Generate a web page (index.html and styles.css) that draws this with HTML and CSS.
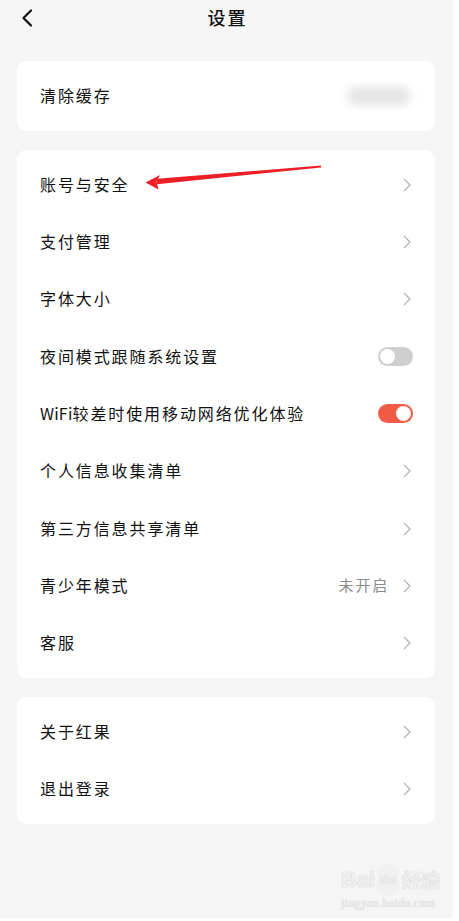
FILE: index.html
```html
<!DOCTYPE html>
<html lang="zh">
<head>
<meta charset="utf-8">
<title>设置</title>
<link rel="stylesheet" href="styles.css">
</head>
<body>
<div class="screen">
  <header class="topbar">
    <svg class="back" width="12" height="18" viewBox="0 0 12 18"><path d="M10 1.5 L2.5 9 L10 16.5" fill="none" stroke="#111" stroke-width="2.2" stroke-linecap="round" stroke-linejoin="round"/></svg>
    <h1 class="title">设置</h1>
  </header>

  <main class="cards">
    <section class="card">
      <div class="row row-cache">
        <span class="label">清除缓存</span>
        <span class="blurred"></span>
      </div>
    </section>

    <section class="card">
      <div class="row"><span class="label">账号与安全</span><svg class="chev" width="8" height="14" viewBox="0 0 8 14"><path d="M1 1 L7 7 L1 13" fill="none" stroke="#b4b4b4" stroke-width="1.3"/></svg></div>
      <div class="row"><span class="label">支付管理</span><svg class="chev" width="8" height="14" viewBox="0 0 8 14"><path d="M1 1 L7 7 L1 13" fill="none" stroke="#b4b4b4" stroke-width="1.3"/></svg></div>
      <div class="row"><span class="label">字体大小</span><svg class="chev" width="8" height="14" viewBox="0 0 8 14"><path d="M1 1 L7 7 L1 13" fill="none" stroke="#b4b4b4" stroke-width="1.3"/></svg></div>
      <div class="row"><span class="label">夜间模式跟随系统设置</span><span class="toggle"><span class="knob"></span></span></div>
      <div class="row"><span class="label"><span class="latin">WiFi</span>较差时使用移动网络优化体验</span><span class="toggle on"><span class="knob"></span></span></div>
      <div class="row"><span class="label">个人信息收集清单</span><svg class="chev" width="8" height="14" viewBox="0 0 8 14"><path d="M1 1 L7 7 L1 13" fill="none" stroke="#b4b4b4" stroke-width="1.3"/></svg></div>
      <div class="row"><span class="label">第三方信息共享清单</span><svg class="chev" width="8" height="14" viewBox="0 0 8 14"><path d="M1 1 L7 7 L1 13" fill="none" stroke="#b4b4b4" stroke-width="1.3"/></svg></div>
      <div class="row"><span class="label">青少年模式</span><span class="value">未开启</span><svg class="chev" width="8" height="14" viewBox="0 0 8 14"><path d="M1 1 L7 7 L1 13" fill="none" stroke="#b4b4b4" stroke-width="1.3"/></svg></div>
      <div class="row"><span class="label">客服</span><svg class="chev" width="8" height="14" viewBox="0 0 8 14"><path d="M1 1 L7 7 L1 13" fill="none" stroke="#b4b4b4" stroke-width="1.3"/></svg></div>
    </section>

    <section class="card">
      <div class="row"><span class="label">关于红果</span><svg class="chev" width="8" height="14" viewBox="0 0 8 14"><path d="M1 1 L7 7 L1 13" fill="none" stroke="#b4b4b4" stroke-width="1.3"/></svg></div>
      <div class="row"><span class="label">退出登录</span><svg class="chev" width="8" height="14" viewBox="0 0 8 14"><path d="M1 1 L7 7 L1 13" fill="none" stroke="#b4b4b4" stroke-width="1.3"/></svg></div>
    </section>
  </main>

  <svg class="arrow" width="190" height="30" viewBox="140 162 190 30">
    <polygon points="321,165.6 321,167.4 157,184.2 157,178.8" fill="#ec1f26"/>
    <polygon points="145.5,182.5 160,175 156.5,181.5 158.5,189.5" fill="#ec1f26"/>
  </svg>

  <div class="watermark">
    <div class="wm-top"><span class="wm-bai">Bai</span><span class="wm-paw">du</span><span class="wm-cn">经验</span></div>
    <div class="wm-url">jingyan.baidu.com</div>
  </div>
</div>
</body>
</html>
```

FILE: styles.css
```css
* { box-sizing: border-box; margin: 0; padding: 0; }
html, body { background: #ffffff; }
body {
  width: 459px;
  height: 921px;
  overflow: hidden;
  font-family: "Noto Sans CJK SC", "Noto Sans", sans-serif;
  color: #111;
}
.screen {
  position: relative;
  width: 453px;
  height: 918px;
  background: #f5f5f5;
}
.topbar {
  position: relative;
  height: 37px;
  display: flex;
  align-items: center;
  justify-content: center;
  padding-bottom: 3px;
}
.back {
  position: absolute;
  left: 21px;
  top: 9px;
}
.title {
  font-size: 18px;
  font-weight: 500;
  letter-spacing: 2px;
  line-height: 1;
  padding-left: 2px;
}
.cards {
  display: flex;
  flex-direction: column;
  gap: 19px;
  padding: 24px 18px 0 17px;
}
.card {
  background: #fff;
  border-radius: 9px;
  padding: 6px 0;
}
.row {
  height: 57.33px;
  display: flex;
  align-items: center;
  padding: 0 23px 2px 23px;
}
.row-cache { height: 58px; }
.label {
  flex: 1;
  font-size: 16px;
  letter-spacing: 1.9px;
  line-height: 1;
  color: #111;
}
.latin { letter-spacing: 0.2px; }
.chev { flex: none; margin-right: 1px; margin-top: 2px; }
.value {
  font-size: 15px;
  color: #8a8a8a;
  letter-spacing: 1.8px;
  margin-right: 14px;
}
.blurred {
  width: 62px;
  height: 18px;
  background: #e4e4e4;
  border-radius: 6px;
  filter: blur(5px);
  margin-right: 2px;
  margin-top: 2px;
}
.toggle {
  position: relative;
  flex: none;
  width: 35px;
  height: 19px;
  border-radius: 10px;
  background: #cfcfcf;
  margin-right: -1px;
  margin-top: 2px;
}
.toggle .knob {
  position: absolute;
  top: 2px;
  left: 2px;
  width: 15px;
  height: 15px;
  border-radius: 50%;
  background: #fff;
}
.toggle.on { background: #ef5b45; }
.toggle.on .knob { left: 18px; }
.arrow {
  position: absolute;
  left: 140px;
  top: 162px;
}
.watermark {
  position: absolute;
  left: 341px;
  top: 864px;
  color: #efefef;
  font-family: "Liberation Sans", sans-serif;
  text-shadow: 0 0 1px #cfcfcf, 0 0 1px #cfcfcf;
}
.wm-top {
  display: flex;
  align-items: center;
  font-size: 22px;
  font-weight: bold;
  line-height: 28px;
}
.wm-paw {
  font-size: 13px;
  border-radius: 50% 50% 45% 45%;
  padding: 2px 3px;
  margin: 0 3px 0 2px;
  background: #f0f0f0;
}
.wm-cn {
  font-family: "Noto Sans CJK SC", sans-serif;
  font-size: 19px;
  font-weight: bold;
}
.wm-url {
  font-family: "Liberation Serif", serif;
  font-size: 12px;
  line-height: 14px;
  letter-spacing: 0.3px;
}
```
